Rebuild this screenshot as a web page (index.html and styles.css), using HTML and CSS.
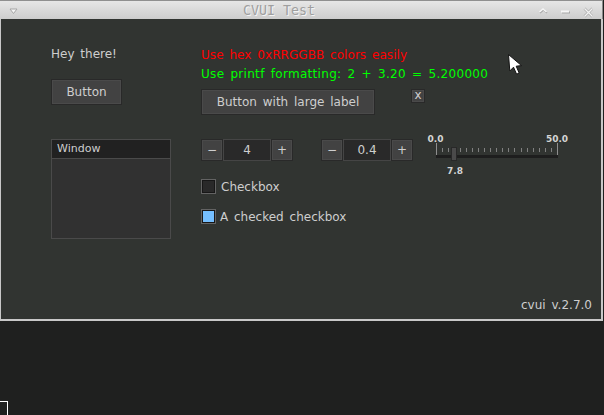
FILE: index.html
```
<!DOCTYPE html>
<html>
<head>
<meta charset="utf-8">
<link rel="stylesheet" href="styles.css">
</head>
<body>
<div class="frame">
  <div class="titlebar">
    <svg class="tb-menu" width="10" height="18" viewBox="0 0 10 18">
      <polygon points="2,8 9,8 5.5,12.5" fill="#f4f4f4" stroke="#a6a6a6" stroke-width="1"/>
    </svg>
    <span class="title">CVUI Test</span>
    <svg class="tb-btns" width="56" height="18" viewBox="0 0 56 18">
      <polyline points="3,12 6.5,9 10,12" fill="none" stroke="#a8a8a8" stroke-width="1.5"/>
      <polyline points="2.5,11 6,8 9.5,11" fill="none" stroke="#f6f6f6" stroke-width="1.5"/>
      <rect x="25" y="10.5" width="8" height="2" fill="#a8a8a8"/>
      <rect x="24" y="9.5" width="8" height="2" fill="#f6f6f6"/>
      <path d="M47.5 7.5L55.5 15.5M55.5 7.5L47.5 15.5" stroke="#a8a8a8" stroke-width="2.6"/>
      <path d="M47.5 7.5L55.5 15.5M55.5 7.5L47.5 15.5" stroke="#f2f2f2" stroke-width="1.4"/>
    </svg>
  </div>
  <div class="body">
    <div class="main">
      <div class="col-a">
        <p class="txt">Hey there!</p>
        <div class="btn btn-a">Button</div>
        <div class="win"><div class="win-head">Window</div></div>
      </div>
      <div class="col-b">
        <p class="txt red">Use hex 0xRRGGBB colors easily</p>
        <p class="txt green">Use printf formatting: 2 + 3.20 = 5.200000</p>
        <div class="row r1">
          <div class="btn btn-large">Button with large label</div>
          <div class="btn btn-x">x</div>
        </div>
        <div class="row r2">
          <div class="counter">
            <div class="btn cbtn">−</div>
            <div class="cval">4</div>
            <div class="btn cbtn">+</div>
          </div>
          <div class="counter">
            <div class="btn cbtn">−</div>
            <div class="cval">0.4</div>
            <div class="btn cbtn">+</div>
          </div>
          <svg class="track" width="150" height="46" viewBox="0 0 150 46">
            <text x="14.5" y="12" text-anchor="middle">0.0</text>
            <text x="136" y="12" text-anchor="middle">50.0</text>
            <path d="M15.5 13V25M136.5 13V25" stroke="#8e8e8e" stroke-width="1"/>
            <path d="M21.5 18V22M27.5 18V22M33.5 18V22M39.5 18V22M45.5 18V22M51.5 18V22M57.5 18V22M63.5 18V22M69.5 18V22M75.5 18V22M81.5 18V22M87.5 18V22M93.5 18V22M100.5 18V22M106.5 18V22M112.5 18V22M118.5 18V22M124.5 18V22M130.5 18V22" stroke="#808080" stroke-width="1"/>
            <rect x="15" y="25" width="122" height="3" fill="#1e1e1e"/>
            <rect x="30.5" y="17.5" width="5" height="13" fill="#4a4a4a" stroke="#282828" stroke-width="1"/>
            <text x="34" y="44" text-anchor="middle">7.8</text>
          </svg>
        </div>
        <div class="chk-row">
          <span class="chk"></span>
          <span class="txt">Checkbox</span>
        </div>
        <div class="chk-row chk-row2">
          <span class="chk on"></span>
          <span class="txt">A checked checkbox</span>
        </div>
      </div>
    </div>
    <div class="footer txt">cvui v.2.7.0</div>
    <svg class="cursor" width="16" height="22" viewBox="0 0 16 22">
      <polygon points="0.5,0.5 1.8,17 5.5,13.2 8.6,20.2 11.2,19 8.2,12.2 13.5,11.6" fill="#ffffff" stroke="#111111" stroke-width="1" stroke-linejoin="round"/>
    </svg>
  </div>
</div>
<div class="desk-box"></div>
</body>
</html>
```
FILE: styles.css
```
html, body {
  margin: 0;
  padding: 0;
}
body {
  width: 604px;
  height: 415px;
  overflow: hidden;
  background: #1f201f;
}
.frame {
  width: 603px;
}
.titlebar {
  box-sizing: border-box;
  height: 19px;
  border-top: 1px solid #8f8f8f;
  border-right: 1px solid #8a8a8a;
  background: linear-gradient(#e6e6e6, #cdcdcd);
  display: flex;
  align-items: flex-start;
}
.tb-menu {
  display: block;
  margin-left: 8px;
}
.title {
  margin-left: 225px;
  padding-top: 1px;
  font: 13.3px/18px "DejaVu Sans Mono", monospace;
  color: #9f9f9f;
  text-shadow: 1px 1px 0 #f4f4f4;
  white-space: nowrap;
}
.tb-btns {
  display: block;
  margin-left: auto;
  margin-right: 9px;
}
.body {
  position: relative;
  box-sizing: content-box;
  width: 600px;
  height: 300px;
  border-left: 1px solid #c8c8c8;
  border-right: 2px solid #c8c8c8;
  border-bottom: 2px solid #c8c8c8;
  background: #313431;
  display: flex;
  flex-direction: column;
}
.main {
  display: flex;
  align-items: flex-start;
  padding: 28px 0 0 50px;
}
.col-a {
  width: 120px;
}
.col-b {
  margin-left: 30px;
  margin-top: 1px;
}
.txt {
  margin: 0;
  font: 12px/14px "DejaVu Sans", sans-serif;
  color: #cecece;
  word-spacing: 2px;
  white-space: nowrap;
}
.red {
  color: #ff0000;
  letter-spacing: 0.05px;
}
.green {
  color: #00ff00;
  margin-top: 5px;
  letter-spacing: 0.3px;
}
.btn {
  box-sizing: border-box;
  display: flex;
  align-items: center;
  justify-content: center;
  border: 1px solid #292929;
  box-shadow: inset 0 0 0 1px #4a4a4a;
  background: #424242;
  color: #cecece;
  font: 12px/14px "DejaVu Sans", sans-serif;
  word-spacing: 2px;
  white-space: nowrap;
}
.btn-a {
  width: 71px;
  height: 26px;
  margin-top: 18px;
}
.win {
  box-sizing: border-box;
  width: 120px;
  height: 100px;
  margin-top: 34px;
  border: 1px solid #4a4a4a;
  background: #313131;
}
.win-head {
  height: 19px;
  box-sizing: border-box;
  border-bottom: 1px solid #4a4a4a;
  background: #212121;
  padding-left: 5px;
  font: 11px/17px "DejaVu Sans", sans-serif;
  color: #cecece;
}
.row {
  display: flex;
  align-items: flex-start;
}
.r1 {
  margin-top: 8px;
}
.btn-large {
  width: 174px;
  height: 26px;
}
.btn-x {
  width: 14px;
  height: 14px;
  margin-left: 36px;
  font-size: 12px;
  line-height: 10px;
  padding-bottom: 2px;
}
.r2 {
  margin-top: 24px;
}
.counter {
  display: flex;
}
.counter + .counter {
  margin-left: 28px;
}
.cbtn {
  width: 22px;
  height: 22px;
}
.cval {
  box-sizing: border-box;
  width: 48px;
  height: 22px;
  background: #292929;
  border: 1px solid #454545;
  display: flex;
  align-items: center;
  justify-content: center;
  color: #cecece;
  font: 12px/14px "DejaVu Sans", sans-serif;
}
.track {
  display: block;
  margin: -9px 0 -15px 8px;
  overflow: visible;
}
.track text {
  font: bold 9px "DejaVu Sans", sans-serif;
  fill: #d4d4d4;
}
.chk-row {
  display: flex;
  align-items: center;
  gap: 5px;
  margin-top: 18px;
}
.chk-row2 {
  margin-top: 15px;
  gap: 4px;
}
.chk {
  box-sizing: border-box;
  width: 15px;
  height: 15px;
  border: 1px solid #636363;
  background: #292929;
  box-shadow: inset 0 0 0 1px #171717;
}
.chk.on {
  background: #75bfff;
}
.footer {
  margin-top: auto;
  padding: 0 0 7px 520px;
}
.cursor {
  position: absolute;
  left: 507px;
  top: 35px;
}
.desk-box {
  margin-top: 80px;
  width: 7px;
  height: 20px;
  border-top: 1px solid #ffffff;
  border-right: 1px solid #ffffff;
}
```
